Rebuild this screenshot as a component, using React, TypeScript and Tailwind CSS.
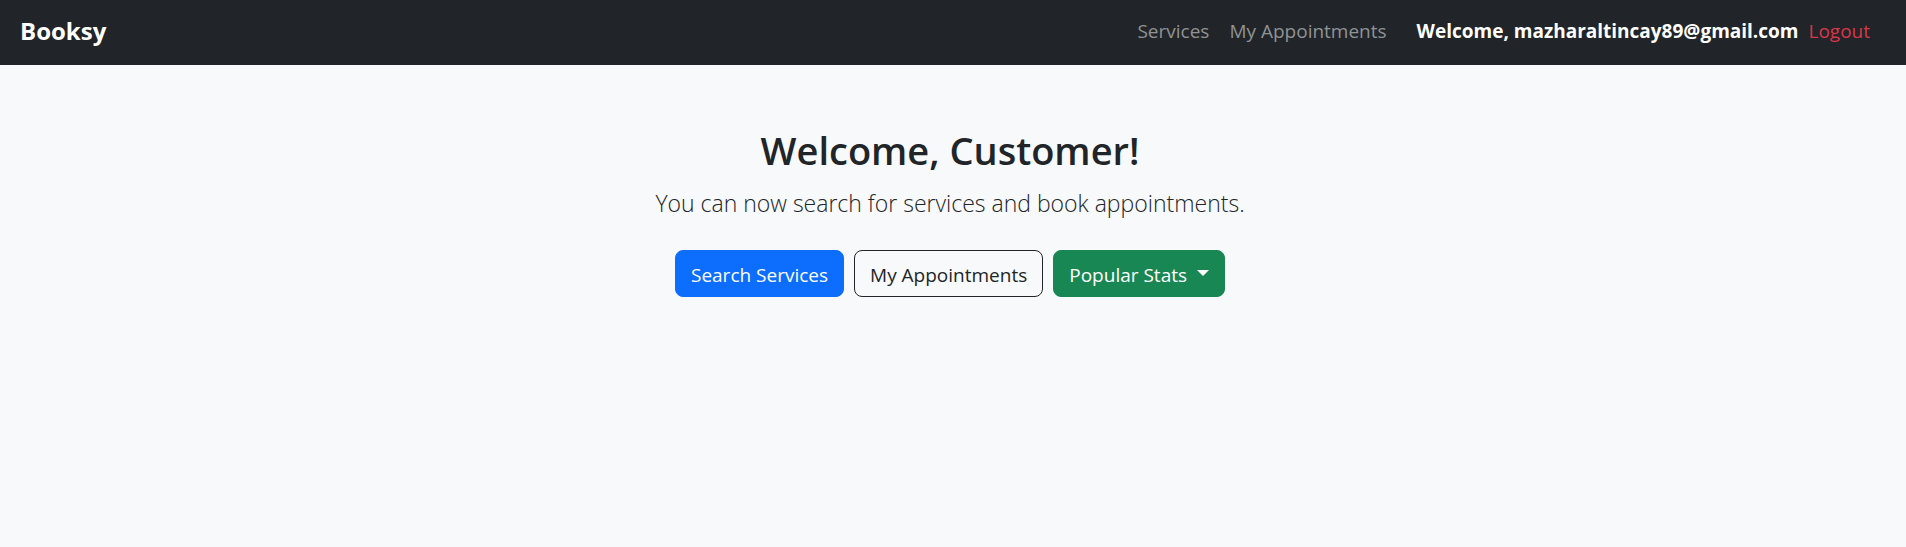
export default function App() {
  return (
    <div className="min-h-screen bg-[#f8f9fa] font-['Open_Sans',sans-serif] text-[#212529]">
      <nav className="flex items-center justify-between bg-[#212529] px-5 pt-3 pb-[15px]">
        <a href="#" className="text-[24px] leading-[38px] font-bold text-white">Booksy</a>
        <div className="flex items-center pr-4 text-[19px] leading-[30px]">
          <a href="#services" className="mr-5 text-[#909294]">Services</a>
          <a href="#appointments" className="mr-[30px] text-[#909294]">My Appointments</a>
          <span className="mr-2.5 font-bold text-white">Welcome, mazharaltincay89@gmail.com</span>
          <a href="#logout" className="text-[#dc3545]">Logout</a>
        </div>
      </nav>
      <main className="flex flex-col items-center pt-[61px] pr-1.5">
        <h2 className="mb-2.5 text-[38px] leading-[48px] font-semibold">Welcome, Customer!</h2>
        <p className="mb-7 text-[23px] leading-[38px] font-light">You can now search for services and book appointments.</p>
        <div className="flex justify-center gap-2.5 text-[19px] leading-[30px]">
          <button type="button" className="rounded-lg border border-[#0d6efd] bg-[#0d6efd] px-[15px] pt-[9px] pb-1.5 text-white">Search Services</button>
          <button type="button" className="rounded-lg border border-[#212529] px-[15px] pt-[9px] pb-1.5">My Appointments</button>
          <button type="button" className="flex items-center gap-2.5 rounded-lg border border-[#198754] bg-[#198754] px-[15px] pt-[9px] pb-1.5 text-white">
            Popular Stats
            <span className="mb-1 h-0 w-0 border-x-6 border-t-6 border-x-transparent border-t-white" />
          </button>
        </div>
      </main>
    </div>
  );
}
